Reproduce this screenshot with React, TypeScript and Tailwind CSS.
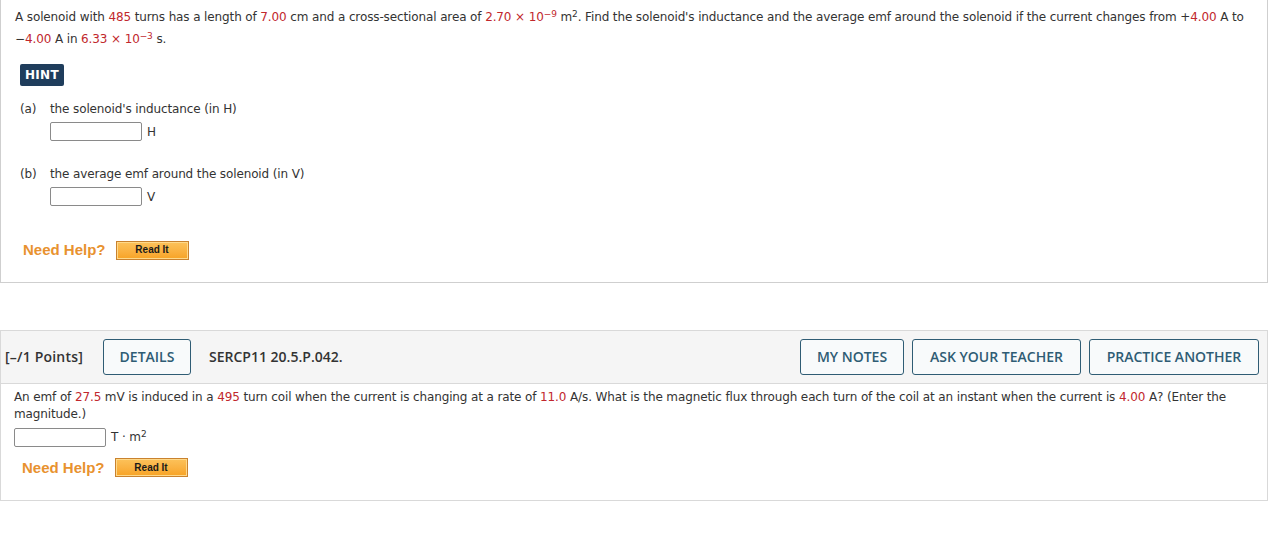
const red = 'text-[#c1272d]';

function Num({ children }: { children: React.ReactNode }) {
  return <span className={red}>{children}</span>;
}

function ReadIt() {
  return (
    <button
      type="button"
      className="h-[19px] w-[73px] border border-[#c9822e] bg-gradient-to-b from-[#fcc25a] to-[#f7a323] text-[10px] font-bold text-[#1a1a1a] leading-none tracking-normal shadow-[inset_0_0_0_1px_#ffd98a]"
      style={{ fontFamily: '"Liberation Sans", Arial, sans-serif' }}
    >
      Read It
    </button>
  );
}

function NeedHelp() {
  return (
    <div className="flex items-center gap-[10px]">
      <span
        className="text-[15px] font-bold tracking-normal text-[#e8922f]"
        style={{ fontFamily: '"Liberation Sans", Arial, sans-serif' }}
      >
        Need Help?
      </span>
      <ReadIt />
    </div>
  );
}

function AnswerBox({ unit }: { unit: React.ReactNode }) {
  return (
    <div className="flex items-center">
      <div className="h-[19px] w-[92px] rounded-[2px] border border-[#8a8a8a] bg-white" />
      <span className="ml-[5px]">{unit}</span>
    </div>
  );
}

function HeaderButton({ label, width }: { label: string; width: string }) {
  return (
    <button
      type="button"
      className={`h-[36px] ${width} rounded-[3px] border border-[#2f5c74] bg-[#f8fafb] text-[14px] font-semibold text-[#2f5c74]`}
    >
      {label}
    </button>
  );
}

export default function App() {
  return (
    <div
      className="min-h-screen bg-white text-[12px] tracking-[-0.12px] text-[#333]"
      style={{ fontFamily: '"DejaVu Sans", Verdana, sans-serif' }}
    >
      {/* Question 1 card */}
      <div className="w-[1268px] border-x border-b border-[#cfcfcf] pb-[20px] pl-[14px] pt-[6px]">
        <p className="leading-[22px]">
          A solenoid with <Num>485</Num> turns has a length of <Num>7.00</Num> cm and a cross-sectional area of{' '}
          <Num>
            2.70 × 10<sup className="text-[9px]">−9</sup>
          </Num>{' '}
          m<sup className="text-[9px]">2</sup>. Find the solenoid's inductance and the average emf around the solenoid
          if the current changes from +<Num>4.00</Num> A to −<Num>4.00</Num> A in{' '}
          <Num>
            6.33 × 10<sup className="text-[9px]">−3</sup>
          </Num>{' '}
          s.
        </p>

        <div className="mt-[14px] ml-[5px] inline-flex h-[22px] items-center rounded-[2px] bg-[#1f3d5c] px-[5px] text-[12px] font-bold tracking-wide text-white">
          HINT
        </div>

        <div className="mt-[13px] ml-[5px] flex flex-col">
          <div className="flex leading-[20px]">
            <span className="w-[30px]">(a)</span>
            <span>the solenoid's inductance (in H)</span>
          </div>
          <div className="ml-[30px] mt-[3px]">
            <AnswerBox unit="H" />
          </div>

          <div className="mt-[23px] flex leading-[20px]">
            <span className="w-[30px]">(b)</span>
            <span>the average emf around the solenoid (in V)</span>
          </div>
          <div className="ml-[30px] mt-[3px]">
            <AnswerBox unit="V" />
          </div>
        </div>

        <div className="mt-[33px] ml-[8px]">
          <NeedHelp />
        </div>
      </div>

      {/* Question 2 card */}
      <div className="mt-[47px] w-[1268px] border border-[#d9d9d9]">
        <div
          className="flex h-[52px] items-center bg-[#f5f5f5] pl-[4px] pr-[8px] text-[14px] tracking-normal text-[#333]"
          style={{ fontFamily: '"Open Sans", sans-serif' }}
        >
          <span className="font-semibold tracking-[0.2px]">[–/1 Points]</span>
          <div className="ml-[20px]">
            <HeaderButton label="DETAILS" width="w-[88px]" />
          </div>
          <span className="ml-[18px] font-semibold">SERCP11 20.5.P.042.</span>
          <div className="ml-auto flex gap-[8px]">
            <HeaderButton label="MY NOTES" width="w-[104px]" />
            <HeaderButton label="ASK YOUR TEACHER" width="w-[169px]" />
            <HeaderButton label="PRACTICE ANOTHER" width="w-[170px]" />
          </div>
        </div>

        <div className="border-t border-[#d9d9d9] px-[13px] pb-[21px] pt-[5px]">
          <p className="leading-[17px]">
            An emf of <Num>27.5</Num> mV is induced in a <Num>495</Num> turn coil when the current is changing at a rate
            of <Num>11.0</Num> A/s. What is the magnetic flux through each turn of the coil at an instant when the current
            is <Num>4.00</Num> A? (Enter the magnitude.)
          </p>
          <div className="mt-[5px]">
            <AnswerBox
              unit={
                <span>
                  T · m<sup className="text-[9px]">2</sup>
                </span>
              }
            />
          </div>
          <div className="mt-[10px] ml-[8px]">
            <NeedHelp />
          </div>
        </div>
      </div>
    </div>
  );
}
